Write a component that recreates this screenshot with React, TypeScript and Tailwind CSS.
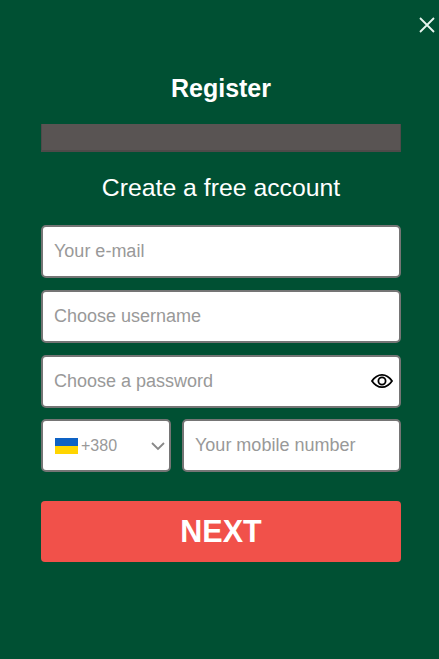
const font = "font-['Liberation_Sans',Arial,sans-serif]";

function Field({ placeholder, type = "text" }: { placeholder: string; type?: string }) {
  return (
    <input
      type={type}
      placeholder={placeholder}
      className="h-[53px] w-full rounded-[5px] border-2 border-[#757575] bg-white px-[11px] text-lg text-[#333] outline-none placeholder:text-[#999]"
    />
  );
}

export default function App() {
  return (
    <main className={`relative flex h-[659px] w-[439px] flex-col overflow-hidden bg-[#005033] pl-[41px] pr-[38px] pt-[72px] text-white ${font}`}>
      <button className="absolute right-[3px] top-[16px] h-[18px] w-[18px] text-[#e6f5ee]" aria-label="Close">
        <svg viewBox="0 0 18 18" fill="none" stroke="currentColor" strokeWidth="1.8" className="h-full w-full">
          <path d="M2 2 L16 16 M16 2 L2 16" />
        </svg>
      </button>

      <h1 className="text-center text-[25px] font-bold leading-[32px]">Register</h1>

      <div className="mt-[20px] h-[28px] border-b-2 border-l border-r border-[#4e4a49] bg-[#595453]" />

      <h2 className="mt-[20px] text-center text-[24.8px] leading-[32px]">Create a free account</h2>

      <form className="mt-[21px] flex flex-col gap-3">
        <Field placeholder="Your e-mail" type="email" />
        <Field placeholder="Choose username" />
        <div className="relative">
          <Field placeholder="Choose a password" type="password" />
          <svg viewBox="0 0 24 24" fill="none" stroke="#000" strokeWidth="1.8" className="absolute right-[7px] top-[14px] h-[24px] w-[24px]">
            <path d="M2 12 C5 7.5 8.5 5.8 12 5.8 C15.5 5.8 19 7.5 22 12 C19 16.5 15.5 18.2 12 18.2 C8.5 18.2 5 16.5 2 12 Z" />
            <circle cx="12" cy="12" r="3.6" />
          </svg>
        </div>
        <div className="-mt-px flex gap-[11px]">
          <div className="flex h-[53px] w-[130px] shrink-0 items-center rounded-[5px] border-2 border-[#757575] bg-white pl-[12px] pr-[4px]">
            <span className="flex h-4 w-[23px] shrink-0 flex-col">
              <span className="h-1/2 bg-[#0e62c4]" />
              <span className="h-1/2 bg-[#ffd500]" />
            </span>
            <span className="ml-[3px] text-base text-[#999]">+380</span>
            <svg viewBox="0 0 14 14" fill="none" stroke="#888" strokeWidth="1.8" className="ml-auto h-[14px] w-[14px]">
              <path d="M1 4 L7 10 L13 4" />
            </svg>
          </div>
          <input
            placeholder="Your mobile number"
            className="h-[53px] min-w-0 flex-1 rounded-[5px] border-2 border-[#757575] bg-white px-[11px] text-lg text-[#333] outline-none placeholder:text-[#999]"
          />
        </div>
        <button type="button" className="mt-[17px] h-[61px] w-full rounded-[4px] bg-[#f1514a] text-[30.5px] font-bold text-white">
          NEXT
        </button>
      </form>
    </main>
  );
}
